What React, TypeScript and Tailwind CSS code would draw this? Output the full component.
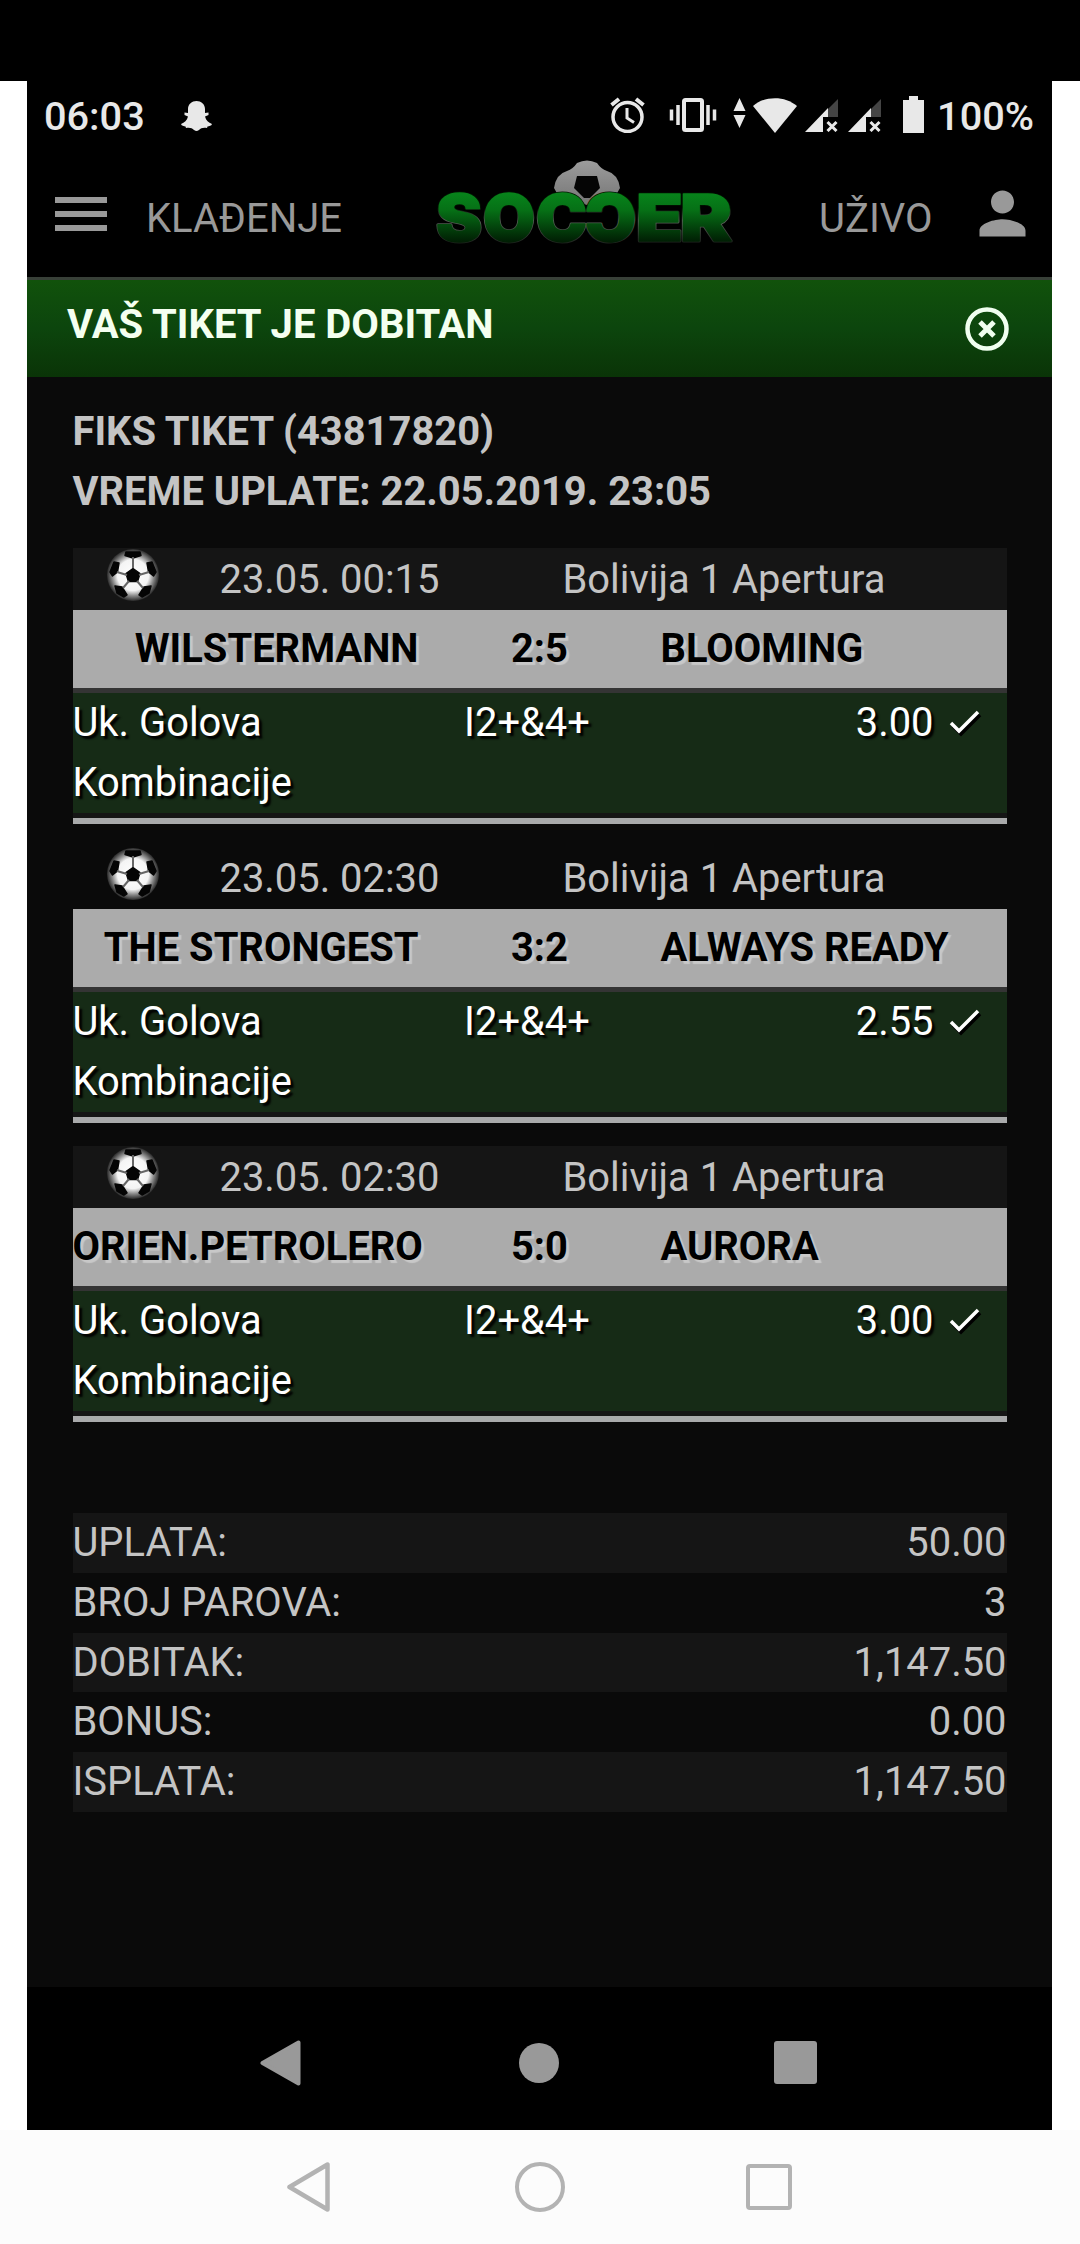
import { type FC } from 'react';
import { MdPerson } from 'react-icons/md';

const matches = [
  { time: '23.05. 00:15', league: 'Bolivija 1 Apertura', home: 'WILSTERMANN', score: '2:5', away: 'BLOOMING', odd: '3.00' },
  { time: '23.05. 02:30', league: 'Bolivija 1 Apertura', home: 'THE STRONGEST', score: '3:2', away: 'ALWAYS READY', odd: '2.55' },
  { time: '23.05. 02:30', league: 'Bolivija 1 Apertura', home: 'ORIEN.PETROLERO', score: '5:0', away: 'AURORA', odd: '3.00' },
];

const summary = [
  { label: 'UPLATA:', value: '50.00' },
  { label: 'BROJ PAROVA:', value: '3' },
  { label: 'DOBITAK:', value: '1,147.50' },
  { label: 'BONUS:', value: '0.00' },
  { label: 'ISPLATA:', value: '1,147.50' },
];

const Signal: FC = () => (
  <svg width="33" height="33" viewBox="0 0 33 33">
    <path d="M33 0V18H22V11Z" fill="#444" />
    <path d="M0 33L23 9V18H18V33Z" fill="#e8e8e8" />
    <path d="M22.500 23l9 9M31.500 23l-9 9" stroke="#e8e8e8" strokeWidth="3" />
  </svg>
);

const StatusBar: FC = () => (
  <div className="flex h-[70px] items-center pl-[17px] pr-[18px] text-[39.700px] font-medium leading-none text-[#e8e8e8]">
    <span className="mt-px w-[101px]">06:03</span>
    <svg className="ml-[36px] -mt-px" width="31" height="30" viewBox="0 0 31 30" fill="#e8e8e8">
      <path d="M15.500 0C20 0 24 3 24 8V12l3.500-.5v2.500L24 15.500c1 4 3.500 6 7 7.500-.5 2-3 2-4.500 2.500l-.5 1.500c-4-.5-6 0-8 2-2 1.300-3 1.300-5 0-2-2-4-2.500-8-2L4.500 25.500C3 25 .5 25 0 23c3.500-1.500 6-3.500 7-7.500L3.500 14v-2.500L7 12V8C7 3 11 0 15.500 0Z" />
    </svg>
    <div className="ml-auto flex items-center">
      <svg className="-mt-[2px]" width="36" height="36" viewBox="0 0 36 36" fill="none" stroke="#e8e8e8">
        <circle cx="17.500" cy="20" r="14.500" strokeWidth="3.500" />
        <path d="M17 11v10l7 4.500" strokeWidth="3" />
        <path d="M1.500 8L9 2M33.500 8L26 2" strokeWidth="4" />
      </svg>
      <svg className="ml-[23px] -mt-[2px]" width="48" height="36" viewBox="0 0 48 36" fill="none" stroke="#e8e8e8">
        <rect x="15" y="3" width="18" height="30" rx="1.500" strokeWidth="4" />
        <path d="M9 8v20M39 8v20" strokeWidth="3.500" />
        <path d="M2.500 12.500v11M45.500 12.500v11" strokeWidth="3.500" />
      </svg>
      <svg className="ml-[16px]" width="13" height="36" viewBox="0 0 13 36" fill="#e8e8e8">
        <path d="M6.500 0L12.500 13H.5ZM6.500 30L12.500 17H.5Z" />
      </svg>
      <svg className="ml-[7px]" width="44" height="36" viewBox="0 0 44 36" fill="#e8e8e8">
        <path d="M22 35L0 8C12-2.500 32-2.500 44 8Z" />
      </svg>
      <div className="ml-[8px] flex gap-[10px]">
        <Signal />
        <Signal />
      </div>
      <svg className="ml-[22px] -mt-[2px]" width="21" height="37" viewBox="0 0 21 37" fill="#e8e8e8">
        <path d="M6 0h9v4h6v33H0V4h6Z" />
      </svg>
      <span className="ml-[13px] mt-px">100%</span>
    </div>
  </div>
);

const Letters: FC = () => (
  <>
    <text x="1" y="81" textLength="46" lengthAdjust="spacingAndGlyphs">S</text>
    <text x="48" y="81" textLength="52" lengthAdjust="spacingAndGlyphs">O</text>
    <text x="101" y="81" textLength="51" lengthAdjust="spacingAndGlyphs">C</text>
    <g transform="translate(302 0) scale(-1 1)">
      <text x="101" y="81" textLength="51" lengthAdjust="spacingAndGlyphs">C</text>
    </g>
    <text x="201" y="81" textLength="47" lengthAdjust="spacingAndGlyphs">E</text>
    <text x="245" y="81" textLength="52" lengthAdjust="spacingAndGlyphs">R</text>
  </>
);

const Logo: FC = () => (
  <svg className="overflow-visible" width="300" height="100" viewBox="0 0 300 100">
    <defs>
      <linearGradient id="green" gradientUnits="userSpaceOnUse" x1="0" y1="32" x2="0" y2="84">
        <stop offset="0" stopColor="#07851b" />
        <stop offset="0.35" stopColor="#067016" />
        <stop offset="1" stopColor="#001802" />
      </linearGradient>
      <linearGradient id="edge" gradientUnits="userSpaceOnUse" x1="0" y1="32" x2="0" y2="84">
        <stop offset="0.3" stopColor="#001500" />
        <stop offset="0.55" stopColor="#5a635a" />
        <stop offset="1" stopColor="#1a201a" />
      </linearGradient>
      <linearGradient id="grey" x1="0" y1="0" x2="0" y2="1">
        <stop offset="0" stopColor="#9c9c9c" />
        <stop offset="1" stopColor="#757575" />
      </linearGradient>
    </defs>
    <path d="M142 3q10-5 20 0q4 6 10 8q11 3 13 17q-4 10-17 12l-16 5l-16-5q-13-2-17-12q2-14 13-17q6-2 10-8Z" fill="url(#grey)" />
    <path d="M142 16h20l3 12-10 10h-6l-10-10Z" fill="#050505" />
    <g fontFamily="Inter, sans-serif" fontWeight="900" fontSize="65" strokeLinejoin="round">
      <g fill="url(#edge)" stroke="url(#edge)" strokeWidth="3">
        <Letters />
      </g>
      <g fill="url(#green)" stroke="url(#green)" strokeWidth="1.500">
        <Letters />
      </g>
    </g>
  </svg>
);

const Header: FC = () => (
  <header className="flex h-[126px] text-[40px] leading-[60px] text-[#999]">
    <div className="ml-[28px] mt-[46px] flex h-[34px] w-[52px] flex-col justify-between">
      <span className="h-[6px] bg-[#999]" />
      <span className="h-[6px] bg-[#999]" />
      <span className="h-[6px] bg-[#999]" />
    </div>
    <span className="ml-[39px] mt-[38px] w-[200px]">KLAĐENJE</span>
    <div className="ml-[89px] mt-[9px]">
      <Logo />
    </div>
    <span className="ml-[84px] mt-[38px] w-[112px]">UŽIVO</span>
    <MdPerson className="ml-[37px] mt-[28px] shrink-0" size={69} />
  </header>
);

const Ball: FC = () => (
  <svg width="54" height="54" viewBox="0 0 54 54">
    <defs>
      <radialGradient id="ball">
        <stop offset="0" stopColor="#fff" />
        <stop offset="0.6" stopColor="#f4f4f4" />
        <stop offset="0.8" stopColor="#8a8a8a" />
        <stop offset="1" stopColor="#2a2a2a" />
      </radialGradient>
    </defs>
    <circle cx="27" cy="27" r="26" fill="url(#ball)" />
    <g fill="#050505" stroke="#050505" strokeWidth="1.500" strokeLinejoin="round">
      <path d="M27 20.500l7 5-2.500 8h-9L20 25.500Z" />
      <path d="M20 4h14l1 3.500-8 2.500-8-2.500Z" />
      <path d="M4 24l4-10 5 1-1.500 9-5 4Z" />
      <path d="M50 24l-4-10-5 1 1.500 9 5 4Z" />
      <path d="M9 38l7 1 5 8-3 2-7-4Z" />
      <path d="M45 38l-7 1-5 8 3 2 7-4Z" />
    </g>
    <path d="M27 9v11M11 24l10 3M43 24l-10 3M17 40l6-7M37 40l-6-7" stroke="#666" strokeWidth="2" />
  </svg>
);

const Match: FC<{ match: (typeof matches)[number]; striped: boolean }> = ({ match, striped }) => (
  <div className="mb-[23px]">
    <div className={`flex h-[62px] leading-[60px] ${striped ? 'bg-[#151515]' : ''}`}>
      <div className="ml-[33px]">
        <Ball />
      </div>
      <span className="ml-[60px] mt-[2px] w-[343px]">{match.time}</span>
      <span className="mt-[2px]">{match.league}</span>
    </div>
    <div className="grid h-[78px] grid-cols-[346px_242px_346px] whitespace-nowrap bg-[#ababab] pt-[9px] font-bold leading-[60px] text-black [text-shadow:3px_3px_1px_#c8c8c8]">
      <span className="text-right">{match.home}</span>
      <span className="text-center">{match.score}</span>
      <span>{match.away}</span>
    </div>
    <div className="h-[5px] bg-[#343434]" />
    <div className="flex h-[120px] bg-[#162b16] leading-[60px] text-white [text-shadow:3px_3px_2px_#000]">
      <span className="w-[299px]">Uk. Golova<br />Kombinacije</span>
      <span className="w-[311px] text-center">I2+&amp;4+</span>
      <span className="w-[251px] text-right">{match.odd}</span>
      <svg className="ml-[15px] mt-[16px] overflow-visible" width="34" height="30" viewBox="0 0 34 30" fill="none" strokeWidth="3.500">
        <path d="M4 17l8 8L31 6" stroke="#000" />
        <path d="M2 14l8 8L29 3" stroke="#fff" />
      </svg>
    </div>
    <div className="h-[5px] bg-[#151515]" />
    <div className="h-[6px] bg-[#a9aaab]" />
  </div>
);

export default function App() {
  return (
    <div className="h-[2244px] w-[1080px] overflow-hidden bg-white font-[Roboto,sans-serif]">
      <div className="h-[81px] bg-black" />
      <div className="ml-[27px] flex h-[2049px] w-[1025px] flex-col bg-black">
        <StatusBar />
        <Header />
        {/* Winning ticket banner */}
        <div className="flex h-[100px] shrink-0 justify-between border-t-[3px] border-[#384038] bg-linear-to-b from-[#11520b] via-[#0c450d] to-[#0a3407] pl-[40px] pr-[43px] text-[40px] font-bold leading-[60px] text-[#f4fff0]">
          <span className="mt-[15px]">VAŠ TIKET JE DOBITAN</span>
          <svg className="mt-[27px]" width="44" height="44" viewBox="0 0 44 44" fill="none" stroke="#f0fff0">
            <circle cx="22" cy="22" r="19.500" strokeWidth="4.500" />
            <path d="M15 15l14 14M29 15L15 29" strokeWidth="5" />
          </svg>
        </div>

        <main className="h-[1610px] bg-[#0a0a0a] pl-[45.500px] pr-[45.500px] text-[39.900px] leading-[60px] text-[#c4c4c4]">
          <div className="pt-[25px] font-bold">
            <p>FIKS TIKET (43817820)</p>
            <p>VREME UPLATE: 22.05.2019. 23:05</p>
          </div>
          <div className="mt-[26px]">
            {matches.map((match, i) => (
              <Match key={i} match={match} striped={i % 2 === 0} />
            ))}
          </div>
          <div className="mt-[91px] leading-[59.800px]">
            {summary.map(({ label, value }) => (
              <div key={label} className="flex justify-between odd:bg-[#151515]">
                <span>{label}</span>
                <span>{value}</span>
              </div>
            ))}
          </div>
        </main>

        <nav className="flex h-[143px] items-center pl-[233px] pt-[8px]">
          <svg width="41" height="46" viewBox="0 0 41 46" fill="#999" stroke="#999" strokeWidth="4" strokeLinejoin="round">
            <path d="M2.500 23L38.500 2.500v41Z" />
          </svg>
          <span className="ml-[218px] size-[40px] rounded-full bg-[#999]" />
          <span className="ml-[215px] size-[43px] rounded-[3px] bg-[#999]" />
        </nav>
      </div>

      <nav className="flex h-[114px] items-center bg-[#fcfcfc] pl-[287px]">
        <svg width="43" height="50" viewBox="0 0 43 50" fill="none" stroke="#b3b3b3" strokeWidth="4.500" strokeLinejoin="round">
          <path d="M2.500 25L40.500 2.500v45Z" />
        </svg>
        <span className="ml-[185px] size-[50px] rounded-full border-[4.500px] border-[#b3b3b3]" />
        <span className="ml-[181px] size-[46px] rounded-[4px] border-[4.500px] border-[#b3b3b3]" />
      </nav>
    </div>
  );
}
